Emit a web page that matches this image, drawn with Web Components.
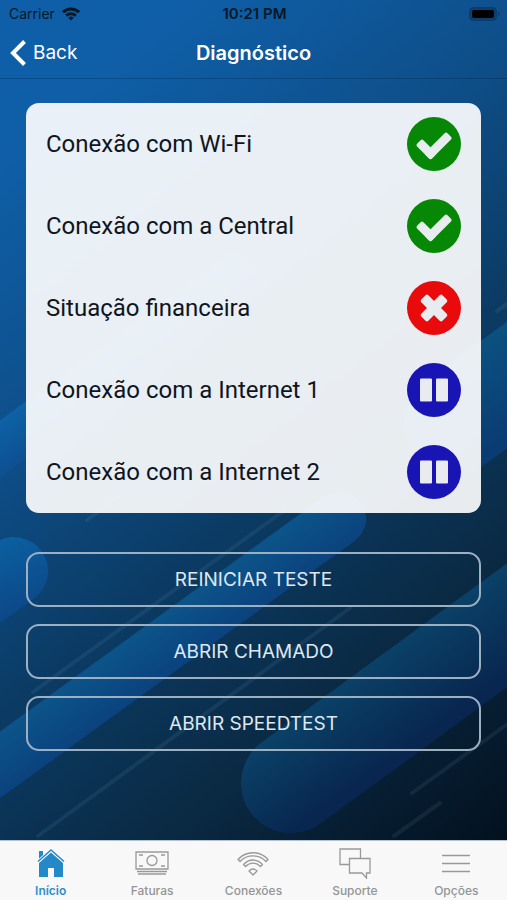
<!DOCTYPE html>
<html lang="pt-BR">
<head>
<meta charset="utf-8">
<meta name="viewport" content="width=device-width, initial-scale=1">
<title>Diagnóstico</title>
<style>
  html, body { margin: 0; height: 100%; }
  body { font-family: Inter, "Liberation Sans", sans-serif; }
</style>
</head>
<body>
<app-screen>
  <status-bar slot="top" carrier="Carrier" time="10:21 PM"></status-bar>
  <nav-bar slot="top" back="Back">Diagnóstico</nav-bar>
  <check-list>
    <check-row status="ok">Conexão com Wi-Fi</check-row>
    <check-row status="ok">Conexão com a Central</check-row>
    <check-row status="fail">Situação financeira</check-row>
    <check-row status="paused">Conexão com a Internet 1</check-row>
    <check-row status="paused">Conexão com a Internet 2</check-row>
  </check-list>
  <action-group>
    <action-button>REINICIAR TESTE</action-button>
    <action-button>ABRIR CHAMADO</action-button>
    <action-button>ABRIR SPEEDTEST</action-button>
  </action-group>
  <tab-bar slot="bottom">
    <tab-item icon="home" active>Início</tab-item>
    <tab-item icon="cash">Faturas</tab-item>
    <tab-item icon="wifi">Conexões</tab-item>
    <tab-item icon="chat">Suporte</tab-item>
    <tab-item icon="menu">Opções</tab-item>
  </tab-bar>
</app-screen>
<script>
class Base extends HTMLElement {
  connectedCallback() {
    if (!this.shadowRoot) this.attachShadow({ mode: 'open' }).innerHTML = this.render();
  }
}

customElements.define('app-screen', class extends Base {
  render() {
    return `<style>
      :host { display: flex; flex-direction: column; min-height: 100%; position: relative; isolation: isolate; }
      .backdrop { position: absolute; inset: 0; width: 100%; height: 100%; z-index: -1; }
      main { flex: 1; padding: 24px 26px; display: flex; flex-direction: column; gap: 39px; }
    </style>
    <svg class="backdrop" viewBox="0 0 507 900" preserveAspectRatio="xMidYMid slice" aria-hidden="true">
      <defs>
        <linearGradient id="bg" gradientUnits="userSpaceOnUse" x1="0" y1="150" x2="540" y2="810">
          <stop offset="0" stop-color="#0f5fa8"/><stop offset=".27" stop-color="#0e4f8a"/>
          <stop offset=".5" stop-color="#0b3c66"/><stop offset=".74" stop-color="#0a2a44"/>
          <stop offset="1" stop-color="#03111f"/>
        </linearGradient>
        <linearGradient id="p1" gradientUnits="userSpaceOnUse" x1="380" y1="640" x2="442" y2="725">
          <stop offset="0" stop-color="#0b456b"/><stop offset="1" stop-color="#08264f"/>
        </linearGradient>
        <linearGradient id="p2" gradientUnits="userSpaceOnUse" x1="154" y1="626" x2="188" y2="673">
          <stop offset="0" stop-color="#0b5388"/><stop offset="1" stop-color="#0b3f7c"/>
        </linearGradient>
        <linearGradient id="p3" gradientUnits="userSpaceOnUse" x1="0" y1="540" x2="30" y2="610">
          <stop offset="0" stop-color="#0b60a0"/><stop offset="1" stop-color="#0d4788"/>
        </linearGradient>
        <linearGradient id="p4" gradientUnits="userSpaceOnUse" x1="0" y1="420" x2="26" y2="456">
          <stop offset="0" stop-color="#0d62a6"/><stop offset="1" stop-color="#0e5092"/>
        </linearGradient>
        <linearGradient id="p5" gradientUnits="userSpaceOnUse" x1="482" y1="340" x2="535" y2="420">
          <stop offset="0" stop-color="#0b5180"/><stop offset="1" stop-color="#0a3c74"/>
        </linearGradient>
      </defs>
      <rect x="-600" width="1700" height="900" fill="url(#bg)"/>
      <g fill="none" stroke-linecap="round">
        <path d="M235 277-60 493" stroke="url(#p4)" stroke-width="46"/>
        <path d="M600 317 455 423" stroke="url(#p5)" stroke-width="102"/>
        <path d="M14 571-90 647" stroke="url(#p3)" stroke-width="68"/>
        <path d="M339 519-80 823" stroke="url(#p2)" stroke-width="54"/>
        <path d="M291 783 620 543" stroke="url(#p1)" stroke-width="100"/>
        <g stroke="#7fb0d0" stroke-opacity=".1" stroke-width="4">
          <path d="M285 510 33 692M350 608 38 836M87 520 120 496M497 311 520 295M440 803 394 836"/>
          <path d="M412 793 520 715"/>
        </g>
      </g>
    </svg>
    <header><slot name="top"></slot></header>
    <main><slot></slot></main>
    <slot name="bottom"></slot>`;
  }
});

customElements.define('status-bar', class extends Base {
  render() {
    return `<style>
      :host { display: grid; grid-template-columns: 1fr auto 1fr; align-items: center; height: 27px;
        padding: 0 7px 0 9px; font-size: 14px; color: #061826; }
      .net { display: flex; align-items: center; gap: 7px; }
      .time { font-weight: 600; font-size: 15px; }
      .battery { justify-self: end; }
      svg { display: block; }
    </style>
    <span class="net"><span>${this.getAttribute('carrier')}</span>
      <svg width="18" height="14" viewBox="0 0 18 14" fill="none" stroke="currentColor" stroke-width="3" role="img" aria-label="Wi-Fi">
        <path d="M1 5.2a11.5 11.5 0 0 1 16 0M4.2 8.7a7 7 0 0 1 9.6 0"/><path d="M9 13.4 6.4 10.8a3.7 3.7 0 0 1 5.2 0z" fill="currentColor" stroke="none"/>
      </svg></span>
    <span class="time">${this.getAttribute('time')}</span>
    <svg class="battery" width="31" height="14" viewBox="0 0 31 14" role="img" aria-label="Bateria">
      <rect x=".5" y=".5" width="27" height="13" rx="4" fill="#0b3f70" stroke="#0b3b68"/>
      <rect x="3" y="3" width="22" height="8" rx="2" fill="#000"/>
      <path d="M29 5q3 2 0 4z" fill="#0a365f"/>
    </svg>`;
  }
});

customElements.define('nav-bar', class extends Base {
  render() {
    return `<style>
      :host { display: grid; grid-template-columns: 1fr auto 1fr; align-items: center; height: 51px;
        padding: 0 10px; color: #fff; border-bottom: 1px solid rgba(5, 40, 80, .35); }
      button { justify-self: start; display: flex; align-items: center; gap: 7px; border: 0; padding: 0;
        background: none; color: inherit; font: inherit; font-size: 19px; line-height: 28px; }
      h1 { margin: 0; font-size: 20px; line-height: 28px; font-weight: 600; }
    </style>
    <button type="button"><svg width="16" height="26" viewBox="0 0 16 26" fill="none" stroke="#fff" stroke-width="4" aria-hidden="true"><path d="M14.5 1.5 3 13l11.5 11.5"/></svg>${this.getAttribute('back')}</button>
    <h1><slot></slot></h1>`;
  }
});

customElements.define('check-list', class extends Base {
  render() {
    return `<style>
      :host { display: block; border-radius: 13px; background: rgba(255, 255, 255, .91); }
    </style><div role="list"><slot></slot></div>`;
  }
});

const statusIcons = {
  ok: ['#068806', 'Aprovado', '<g transform="translate(23.5 43) rotate(-45)" fill="#e8ebf0"><rect y="-9" width="31" height="9" rx="2"/><rect y="-21" width="9" height="21" rx="2"/></g>'],
  fail: ['#e90b0b', 'Falhou', '<g transform="translate(27 27) rotate(45)" fill="#e8ebf0"><rect x="-15" y="-5" width="30" height="10" rx="2"/><rect x="-5" y="-15" width="10" height="30" rx="2"/></g>'],
  paused: ['#1915b4', 'Em espera', '<path d="M13.5 16h11v22h-11zM29.5 16h11v22h-11z" fill="#e8ebf0" stroke="#e8ebf0" stroke-linejoin="round"/>']
};
customElements.define('check-row', class extends Base {
  render() {
    const [color, label, mark] = statusIcons[this.getAttribute('status')];
    this.setAttribute('role', 'listitem');
    return `<style>
      :host { display: flex; align-items: center; justify-content: space-between; height: 82px;
        padding: 0 20px; font-family: Roboto, "Liberation Sans", sans-serif; font-size: 24px; line-height: 32px; color: #10151c; }
      svg { flex: none; }
    </style>
    <span><slot></slot></span>
    <svg width="54" height="54" viewBox="0 0 54 54" role="img" aria-label="${label}"><circle cx="27" cy="27" r="27" fill="${color}"/>${mark}</svg>`;
  }
});

customElements.define('action-group', class extends Base {
  render() {
    return `<style>:host { display: flex; flex-direction: column; gap: 17px; }</style><slot></slot>`;
  }
});

customElements.define('action-button', class extends Base {
  render() {
    return `<style>
      :host { display: block; }
      button { display: block; width: 100%; height: 55px; border: 2px solid #9db0c2; border-radius: 13px;
        background: none; color: #dfe8f0; font: inherit; font-size: 19px; }
    </style><button type="button"><slot></slot></button>`;
  }
});

customElements.define('tab-bar', class extends Base {
  render() {
    return `<style>
      :host { display: block; background: #f8f8f8; border-top: 1px solid #b5c3cf; }
      nav { display: grid; grid-template-columns: repeat(5, 1fr); height: 59px; }
    </style><nav><slot></slot></nav>`;
  }
});

const tabIcons = {
  home: `<g fill="#2389c9" stroke="none"><path d="M6 4h4v4.5L6 12z"/><path d="M6 16 18 5.5 30 16v14h-9v-9h-6v9H6z"/></g><path d="M5 14.5 18 3l13 11.5" stroke="#f8f8f8" stroke-width="3"/><path d="M5 14.5 18 3l13 11.5" stroke="#2389c9" stroke-width="1.5"/>`,
  cash: `<path d="M2 5h32v17H2zM3 24.5h30M4 27h28"/><circle cx="18" cy="13.5" r="5"/><path d="M5 8h4M27 8h4M5 19h4M27 19h4"/>`,
  wifi: `<path d="M3 12.5C11 3.5 25 3.5 33 12.5L31 14.5C24 7 12 7 5 14.5zM8.5 17.5C14 11.5 22 11.5 27.5 17.5L25.5 19.5C21 15 15 15 10.5 19.5zM14 24q4-4 8 0l-4 4z" stroke-linejoin="round"/>`,
  chat: `<path d="M12 17.5H3V2h20.5v9"/><path d="M12.5 11.5H33V26h-3.5v5L25 26H12.5z"/>`,
  menu: `<path d="M4 8.5h28M4 16.5h28M4 24.5h28" stroke-width="1.5"/>`
};
customElements.define('tab-item', class extends Base {
  render() {
    return `<style>
      :host { display: block; color: #949494; }
      :host([active]) { color: #2d8fcb; }
      a { display: flex; flex-direction: column; align-items: center; gap: 4px; padding-top: 6px;
        color: inherit; text-decoration: none; font-size: 12px; line-height: 16px; font-weight: 500; }
      :host([active]) a { font-weight: 600; }
    </style>
    <a href="#${this.getAttribute('icon')}"${this.hasAttribute('active') ? ' aria-current="page"' : ''}>
      <svg width="36" height="32" viewBox="0 0 36 32" fill="none" stroke="#999" stroke-width="1.3" aria-hidden="true">${tabIcons[this.getAttribute('icon')]}</svg>
      <span><slot></slot></span></a>`;
  }
});
</script>
</body>
</html>
